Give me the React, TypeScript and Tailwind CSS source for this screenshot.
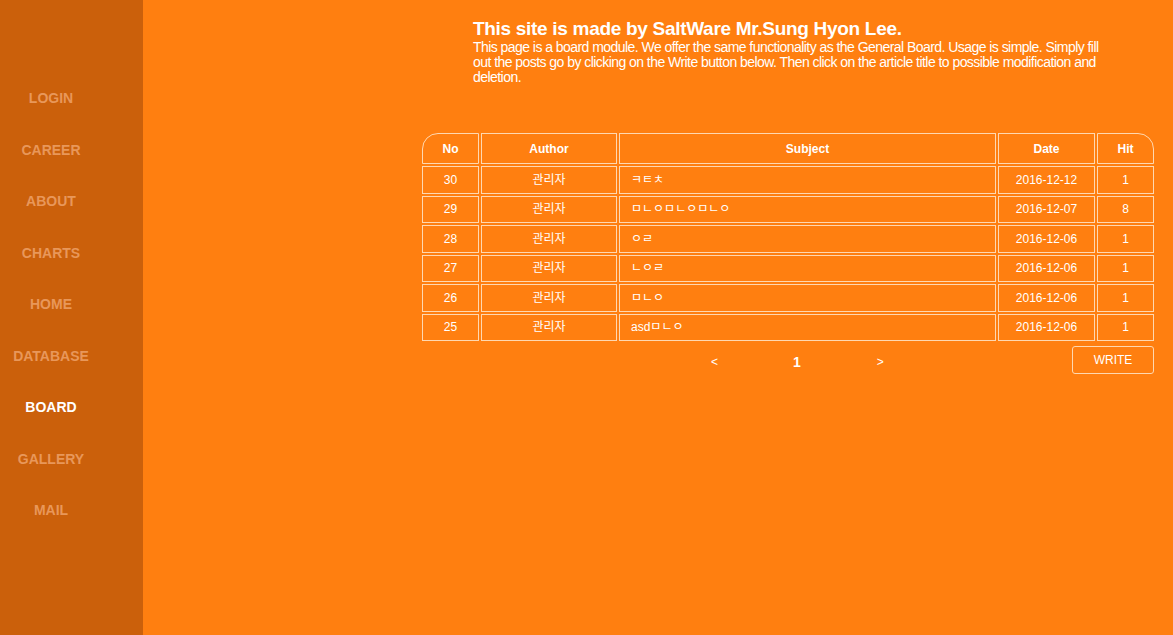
import React from 'react';

const navItems = ['LOGIN', 'CAREER', 'ABOUT', 'CHARTS', 'HOME', 'DATABASE', 'BOARD', 'GALLERY', 'MAIL'];

const posts = [
  { no: 30, author: '관리자', subject: 'ㅋㅌㅊ', date: '2016-12-12', hit: 1 },
  { no: 29, author: '관리자', subject: 'ㅁㄴㅇㅁㄴㅇㅁㄴㅇ', date: '2016-12-07', hit: 8 },
  { no: 28, author: '관리자', subject: 'ㅇㄹ', date: '2016-12-06', hit: 1 },
  { no: 27, author: '관리자', subject: 'ㄴㅇㄹ', date: '2016-12-06', hit: 1 },
  { no: 26, author: '관리자', subject: 'ㅁㄴㅇ', date: '2016-12-06', hit: 1 },
  { no: 25, author: '관리자', subject: 'asdㅁㄴㅇ', date: '2016-12-06', hit: 1 },
];

export default function App() {
  return (
    <div
      className="flex min-h-[635px] w-full bg-[#ff7f10] text-white"
      style={{ fontFamily: '"Liberation Sans", Arial, "Noto Sans CJK KR", sans-serif' }}
    >
      {/* Sidebar */}
      <aside className="w-[143px] shrink-0 bg-[#cb600b] pt-[89px]">
        <nav className="flex flex-col">
          {navItems.map((item) => (
            <a
              key={item}
              href="#"
              className={`flex h-[51.5px] justify-center pr-[41px] text-[14px] font-bold leading-[18px] ${
                item === 'BOARD' ? 'text-white' : 'text-[#e8975a]'
              }`}
            >
              {item}
            </a>
          ))}
        </nav>
      </aside>

      {/* Main */}
      <main className="flex-1 pt-[18px]">
        <div className="ml-[330px] w-[660px]">
          <h1 className="text-[19px] font-bold leading-[22px] tracking-[-0.3px]">
            This site is made by SaltWare Mr.Sung Hyon Lee.
          </h1>
          <p className="whitespace-nowrap text-[14px] leading-[15px] tracking-[-0.55px]">
            This page is a board module. We offer the same functionality as the General Board. Usage is simple. Simply fill
            <br />
            out the posts go by clicking on the Write button below. Then click on the article title to possible modification and
            <br />
            deletion.
          </p>
        </div>

        <div className="ml-[277px] mt-[46px] w-[736px]">
          <table className="w-full border-separate border-spacing-[2px] text-[12px]">
            <thead>
              <tr className="h-[31px] font-bold">
                <th className="w-[57px] rounded-tl-[16px] border border-[#ffd8b0]">No</th>
                <th className="w-[136px] border border-[#ffd8b0]">Author</th>
                <th className="border border-[#ffd8b0]">Subject</th>
                <th className="w-[97px] border border-[#ffd8b0]">Date</th>
                <th className="w-[57px] rounded-tr-[16px] border border-[#ffd8b0]">Hit</th>
              </tr>
            </thead>
            <tbody>
              {posts.map((p) => (
                <tr key={p.no} className="h-[27.5px]">
                  <td className="border border-[#ffd8b0] text-center">{p.no}</td>
                  <td className="border border-[#ffd8b0] text-center">{p.author}</td>
                  <td className="border border-[#ffd8b0] pl-[11px] text-left">{p.subject}</td>
                  <td className="border border-[#ffd8b0] text-center">{p.date}</td>
                  <td className="border border-[#ffd8b0] text-center">{p.hit}</td>
                </tr>
              ))}
            </tbody>
          </table>

          <div className="mt-[3px] flex items-start pr-[2px]">
            <div className="flex items-center pl-[291px] pt-[6px] leading-[20px]">
              <a href="#" className="text-[12px]">&lt;</a>
              <a href="#" className="ml-[75px] text-[14px] font-bold">1</a>
              <a href="#" className="ml-[76px] text-[12px]">&gt;</a>
            </div>
            <button className="ml-auto h-[28px] w-[82px] rounded-[3px] border border-[#ffd8b0] text-[12px]">WRITE</button>
          </div>
        </div>
      </main>
    </div>
  );
}
